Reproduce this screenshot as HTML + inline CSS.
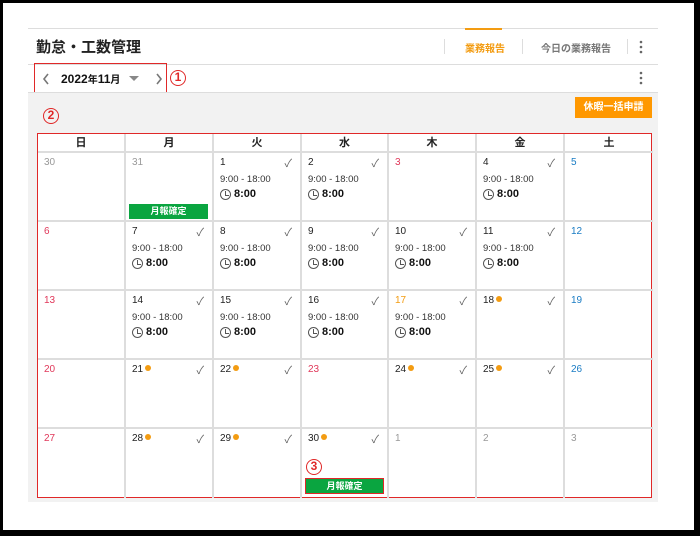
<!DOCTYPE html><html><head><meta charset="utf-8"><style>
*{margin:0;padding:0;box-sizing:border-box}
body{width:700px;height:536px;background:#000;position:relative;overflow:hidden;font-family:"Liberation Sans","Noto Sans CJK JP",sans-serif;}
.pg{position:absolute;left:3px;top:3px;width:691px;height:527px;background:#fff}
.a{position:absolute}
.ln{position:absolute;height:1px;background:#ddd}
.cal{position:absolute;left:37px;top:133px;width:615px;height:365px;border:1px solid #e02828;background:#fff}
.h{position:absolute;top:0;height:19px;font-size:11px;font-weight:bold;text-align:center;line-height:19px;color:#222;border-right:2px solid #ddd;border-bottom:2px solid #ddd}
.c{position:absolute;width:88px;height:69px;border-right:2px solid #ddd;border-bottom:2px solid #ddd;font-size:10px;color:#222}
.n{position:absolute;left:6px;top:4px;font-size:10px}
.g{color:#999}.r{color:#e0385a}.b{color:#1a7cc4}.o{color:#f39c12}
.ck{position:absolute;right:8px;top:2px;font-size:11px;color:#666}
.t{position:absolute;left:6px;top:21px;font-size:9.5px;color:#333}
.k{position:absolute;left:6px;top:35px;font-size:11px;font-weight:bold;color:#111;display:flex;align-items:center}
.k i{display:inline-block;width:11px;height:11px;border:1px solid #555;border-radius:50%;margin-right:3px;position:relative}
.k i:after{content:"";position:absolute;left:4px;top:1px;width:3px;height:4px;border-left:1px solid #555;border-bottom:1px solid #555}
.d{display:inline-block;width:6px;height:6px;border-radius:50%;background:#f39c12;margin-left:2px;vertical-align:1px}
.gb{position:absolute;background:#0aa540;color:#fff;font-size:9px;font-weight:bold;text-align:center;line-height:14px;height:15px}
.num{position:absolute;color:#e02828;width:16px;height:16px;border:1.5px solid #e02828;border-radius:50%;text-align:center;line-height:13px;font-size:12px;font-weight:bold}
</style></head><body><div class="pg"></div>
<div class="ln" style="left:28px;top:28px;width:630px"></div>
<div class="a" style="left:465px;top:28px;width:37px;height:2px;background:#f39c12"></div>
<div class="a" style="left:36px;top:36px;font-size:15px;font-weight:bold;color:#222">勤怠・工数管理</div>
<div class="a" style="left:444px;top:39px;width:1px;height:15px;background:#ddd"></div>
<div class="a" style="left:465px;top:40px;font-size:10px;font-weight:bold;color:#f39c12">業務報告</div>
<div class="a" style="left:522px;top:39px;width:1px;height:15px;background:#ddd"></div>
<div class="a" style="left:541px;top:40px;font-size:10px;font-weight:bold;color:#777">今日の業務報告</div>
<div class="a" style="left:627px;top:39px;width:1px;height:15px;background:#ddd"></div>
<svg class="a" style="left:638px;top:40px" width="6" height="14"><circle cx="3" cy="2" r="1.3" fill="#666"/><circle cx="3" cy="7" r="1.3" fill="#666"/><circle cx="3" cy="12" r="1.3" fill="#666"/></svg>
<div class="ln" style="left:28px;top:64px;width:630px"></div>
<div class="a" style="left:34px;top:63px;width:133px;height:30px;border:1px solid #e02828"></div>
<svg class="a" style="left:42px;top:73px" width="8" height="12"><path d="M6 1L2 6L6 11" stroke="#777" stroke-width="1.6" fill="none"/></svg>
<div class="a" style="left:61px;top:71px;font-size:12px;font-weight:bold;color:#111">2022<span style="font-size:10px">年</span>11<span style="font-size:10px">月</span></div>
<div class="a" style="left:129px;top:76px;width:0;height:0;border-left:5px solid transparent;border-right:5px solid transparent;border-top:5px solid #888"></div>
<svg class="a" style="left:155px;top:73px" width="8" height="12"><path d="M2 1L6 6L2 11" stroke="#777" stroke-width="1.6" fill="none"/></svg>
<div class="num" style="left:170px;top:70px">1</div>
<svg class="a" style="left:638px;top:71px" width="6" height="14"><circle cx="3" cy="2" r="1.3" fill="#666"/><circle cx="3" cy="7" r="1.3" fill="#666"/><circle cx="3" cy="12" r="1.3" fill="#666"/></svg>
<div class="a" style="left:28px;top:92px;width:630px;height:410px;background:#f2f2f2;border-top:1px solid #ddd"></div>
<div class="a" style="left:575px;top:97px;width:77px;height:21px;background:#ff9800;color:#fff;font-size:10px;font-weight:bold;text-align:center;line-height:21px">休暇一括申請</div>
<div class="num" style="left:43px;top:108px">2</div>
<div class="cal">
<div class="h" style="left:0;width:88px">日</div><div class="h" style="left:88px;width:88px">月</div><div class="h" style="left:176px;width:88px">火</div><div class="h" style="left:264px;width:87px">水</div><div class="h" style="left:351px;width:88px">木</div><div class="h" style="left:439px;width:88px">金</div><div class="h" style="left:527px;width:88px;border-right:0">土</div>
<div class="c" style="left:0;top:19px"><span class="n g">30</span></div>
<div class="c" style="left:88px;top:19px"><span class="n g">31</span><div class="gb" style="left:3px;top:51px;width:79px">月報確定</div></div>
<div class="c" style="left:176px;top:19px"><span class="n">1</span><span class="ck">✓</span><span class="t">9:00 - 18:00</span><span class="k"><i></i>8:00</span></div>
<div class="c" style="left:264px;top:19px;width:87px"><span class="n">2</span><span class="ck">✓</span><span class="t">9:00 - 18:00</span><span class="k"><i></i>8:00</span></div>
<div class="c" style="left:351px;top:19px"><span class="n r">3</span></div>
<div class="c" style="left:439px;top:19px"><span class="n">4</span><span class="ck">✓</span><span class="t">9:00 - 18:00</span><span class="k"><i></i>8:00</span></div>
<div class="c" style="left:527px;top:19px;border-right:0"><span class="n b">5</span></div>
<div class="c" style="left:0;top:88px"><span class="n r">6</span></div>
<div class="c" style="left:88px;top:88px"><span class="n">7</span><span class="ck">✓</span><span class="t">9:00 - 18:00</span><span class="k"><i></i>8:00</span></div>
<div class="c" style="left:176px;top:88px"><span class="n">8</span><span class="ck">✓</span><span class="t">9:00 - 18:00</span><span class="k"><i></i>8:00</span></div>
<div class="c" style="left:264px;top:88px;width:87px"><span class="n">9</span><span class="ck">✓</span><span class="t">9:00 - 18:00</span><span class="k"><i></i>8:00</span></div>
<div class="c" style="left:351px;top:88px"><span class="n">10</span><span class="ck">✓</span><span class="t">9:00 - 18:00</span><span class="k"><i></i>8:00</span></div>
<div class="c" style="left:439px;top:88px"><span class="n">11</span><span class="ck">✓</span><span class="t">9:00 - 18:00</span><span class="k"><i></i>8:00</span></div>
<div class="c" style="left:527px;top:88px;border-right:0"><span class="n b">12</span></div>
<div class="c" style="left:0;top:157px"><span class="n r">13</span></div>
<div class="c" style="left:88px;top:157px"><span class="n">14</span><span class="ck">✓</span><span class="t">9:00 - 18:00</span><span class="k"><i></i>8:00</span></div>
<div class="c" style="left:176px;top:157px"><span class="n">15</span><span class="ck">✓</span><span class="t">9:00 - 18:00</span><span class="k"><i></i>8:00</span></div>
<div class="c" style="left:264px;top:157px;width:87px"><span class="n">16</span><span class="ck">✓</span><span class="t">9:00 - 18:00</span><span class="k"><i></i>8:00</span></div>
<div class="c" style="left:351px;top:157px"><span class="n o">17</span><span class="ck">✓</span><span class="t">9:00 - 18:00</span><span class="k"><i></i>8:00</span></div>
<div class="c" style="left:439px;top:157px"><span class="n">18<span class="d"></span></span><span class="ck">✓</span></div>
<div class="c" style="left:527px;top:157px;border-right:0"><span class="n b">19</span></div>
<div class="c" style="left:0;top:226px"><span class="n r">20</span></div>
<div class="c" style="left:88px;top:226px"><span class="n">21<span class="d"></span></span><span class="ck">✓</span></div>
<div class="c" style="left:176px;top:226px"><span class="n">22<span class="d"></span></span><span class="ck">✓</span></div>
<div class="c" style="left:264px;top:226px;width:87px"><span class="n r">23</span></div>
<div class="c" style="left:351px;top:226px"><span class="n">24<span class="d"></span></span><span class="ck">✓</span></div>
<div class="c" style="left:439px;top:226px"><span class="n">25<span class="d"></span></span><span class="ck">✓</span></div>
<div class="c" style="left:527px;top:226px;border-right:0"><span class="n b">26</span></div>
<div class="c" style="left:0;top:295px;border-bottom:0"><span class="n r">27</span></div>
<div class="c" style="left:88px;top:295px;border-bottom:0"><span class="n">28<span class="d"></span></span><span class="ck">✓</span></div>
<div class="c" style="left:176px;top:295px;border-bottom:0"><span class="n">29<span class="d"></span></span><span class="ck">✓</span></div>
<div class="c" style="left:264px;top:295px;width:87px;border-bottom:0"><span class="n">30<span class="d"></span></span><span class="ck">✓</span><div class="num" style="left:4px;top:30px">3</div><div class="gb" style="left:3px;top:49px;width:79px;height:16px;border:1px solid #e02828">月報確定</div></div>
<div class="c" style="left:351px;top:295px;border-bottom:0"><span class="n g">1</span></div>
<div class="c" style="left:439px;top:295px;border-bottom:0"><span class="n g">2</span></div>
<div class="c" style="left:527px;top:295px;border-right:0;border-bottom:0"><span class="n g">3</span></div>
</div>
</body></html>
